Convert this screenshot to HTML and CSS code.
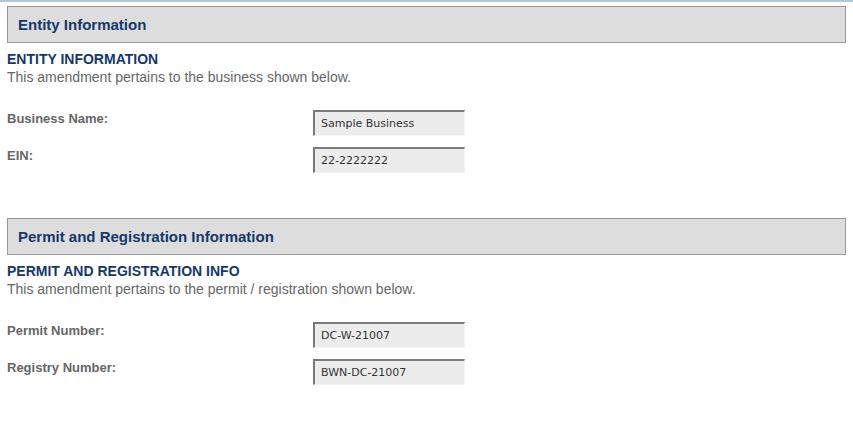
FILE: index.html
```html
<!DOCTYPE html>
<html lang="en">
<head>
    <meta charset="UTF-8">
    <meta name="viewport" content="width=device-width, initial-scale=1.0">
    <title>Amendment - Entity and Permit</title>
    <link rel="stylesheet" href="styles.css">
</head>
<body>
    <div class="page">

        <!-- Entity section -->
        <section class="panel">
            <h2 class="panel-title">Entity Information</h2>
            <h3 class="sub-title">ENTITY INFORMATION</h3>
            <p class="note">This amendment pertains to the business shown below.</p>

            <div class="field">
                <label for="businessName">Business Name:</label>
                <input type="text" id="businessName" class="ro-input" value="Sample Business" readonly>
            </div>
            <div class="field">
                <label for="ein">EIN:</label>
                <input type="text" id="ein" class="ro-input" value="22-2222222" readonly>
            </div>
        </section>

        <!-- Permit section -->
        <section class="panel">
            <h2 class="panel-title">Permit and Registration Information</h2>
            <h3 class="sub-title">PERMIT AND REGISTRATION INFO</h3>
            <p class="note">This amendment pertains to the permit / registration shown below.</p>

            <div class="field">
                <label for="permitNumber">Permit Number:</label>
                <input type="text" id="permitNumber" class="ro-input" value="DC-W-21007" readonly>
            </div>
            <div class="field">
                <label for="registryNumber">Registry Number:</label>
                <input type="text" id="registryNumber" class="ro-input" value="BWN-DC-21007" readonly>
            </div>
        </section>

    </div>
</body>
</html>
```

FILE: styles.css
```css
body {
    font-family: "Liberation Sans", Arial, sans-serif;
    margin: 0;
    padding: 0;
    background-color: #fff;
}

.page {
    border-top: 2px solid #b3c5dc;
    padding: 4px 7px 0 7px;
}

.panel {
    margin-bottom: 45px;
}

.panel-title {
    margin: 0;
    height: 35px;
    line-height: 36px;
    padding-left: 10px;
    background-color: #dddddd;
    border: 1px solid #999;
    color: #14386b;
    font-size: 15px;
    font-weight: bold;
}

.sub-title {
    margin: 7px 0 0 0;
    line-height: 18px;
    font-size: 14px;
    font-weight: bold;
    color: #14386b;
}

.note {
    margin: 0 0 23px 0;
    line-height: 19px;
    font-size: 14px;
    color: #666;
}

.field {
    display: flex;
    align-items: flex-start;
    margin-bottom: 11px;
}

.field:last-child {
    margin-bottom: 0;
}

.field label {
    width: 306px;
    flex-shrink: 0;
    padding-top: 1px;
    line-height: 16px;
    font-size: 13px;
    font-weight: bold;
    color: #666;
}

.ro-input {
    box-sizing: border-box;
    width: 152px;
    height: 26px;
    margin: 0;
    padding: 0 0 0 6px;
    background-color: #ececec;
    border-top: 2px solid #7a7a7a;
    border-left: 2px solid #7a7a7a;
    border-right: 1px solid #f4f4f4;
    border-bottom: 1px solid #f4f4f4;
    font-family: "DejaVu Sans", Verdana, sans-serif;
    font-size: 11px;
    color: #333;
    outline: none;
}
```
